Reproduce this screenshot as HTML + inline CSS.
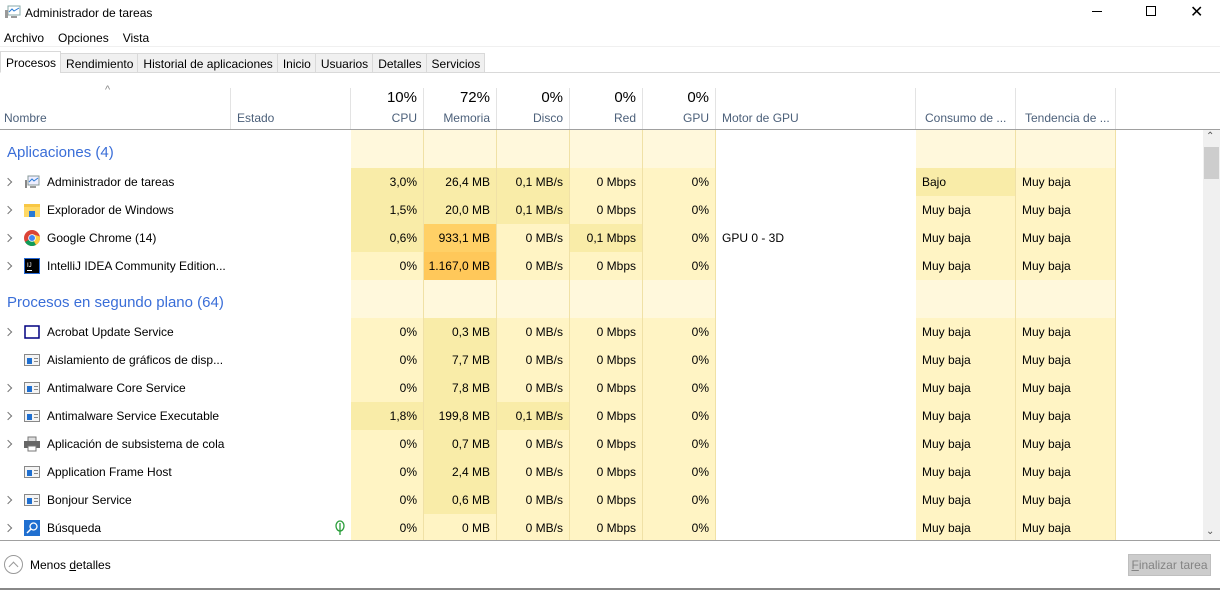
<!DOCTYPE html><html><head><meta charset="utf-8"><style>
*{margin:0;padding:0;box-sizing:border-box}
html,body{width:1220px;height:590px}
body{background:#fff;font-family:"Liberation Sans",sans-serif;font-size:12px;color:#000;position:relative;overflow:hidden}
.abs{position:absolute}
.menu span{margin-right:14px}
.tabs{position:absolute;top:52px;left:0;height:21px;display:flex}
.tab{border:1px solid #d9d9d9;background:#f0f0f0;padding:3px 4px 0 5px;height:20px;margin-left:-1px;margin-top:1px}
.tab.act{background:#fff;border-bottom-color:#fff;margin-top:-1px;height:22px;padding-top:4px}
.hdr{position:absolute;top:88px;height:42px;border-right:1px solid #e3e3e3;text-align:right;padding-right:6px;color:#4c607a}
.hdr .p{font-size:15px;color:#000;position:absolute;right:6px;top:1px}
.hdr .l{position:absolute;right:6px;top:23px}
.row{position:absolute;left:0;width:1203px;height:28px}
.c{position:absolute;top:0;height:100%;line-height:28px;text-align:right;padding-right:6px;border-right:1px solid #f0e1a6;background:#fff4c4}
.d{background:#f9eca8}
.o{background:#ffd066}
.o2{background:#ffc85a}
.g .c{background:#fff8dc}
.nm{position:absolute;left:47px;line-height:28px}
.ar{position:absolute;left:5px;top:11px;width:6px;height:6px;border-right:1.3px solid #777;border-top:1.3px solid #777;transform:rotate(45deg)}
.ic{position:absolute;left:24px;top:6px;width:16px;height:16px}
.gt{position:absolute;left:7px;top:3px;font-size:15px;color:#3a6ed8;line-height:40px}
.txt{position:absolute;line-height:28px;padding-left:6px}
</style></head><body>
<svg class="abs" style="left:5px;top:5px" width="16" height="14"><rect x="3" y="1" width="12" height="9" fill="#fff" stroke="#8aa" /><polyline points="4,7 7,4 9,6 14,3" fill="none" stroke="#2a7bd6"/><rect x="0" y="5" width="3" height="8" fill="#999"/><rect x="6" y="11" width="6" height="2" fill="#999"/></svg>
<div class="abs" style="left:25px;top:6px">Administrador de tareas</div>
<div class="abs" style="left:1092px;top:11px;width:10px;height:1px;background:#000"></div>
<div class="abs" style="left:1146px;top:6px;width:10px;height:10px;border:1px solid #000"></div>
<div class="abs" style="left:1190px;top:2px;font-size:16px">✕</div>
<div class="abs menu" style="left:4px;top:31px"><span>Archivo</span><span>Opciones</span><span>Vista</span></div>
<div class="abs" style="left:0;top:46px;width:1220px;height:1px;background:#f0f0f0"></div>
<div class="abs" style="left:0;top:72px;width:1220px;height:1px;background:#d9d9d9"></div>
<div class="tabs"><div class="tab act" style="margin-left:0">Procesos</div><div class="tab">Rendimiento</div><div class="tab">Historial de aplicaciones</div><div class="tab">Inicio</div><div class="tab">Usuarios</div><div class="tab">Detalles</div><div class="tab">Servicios</div></div>
<div class="abs" style="left:105px;top:84px;color:#888;font-size:11px">^</div>
<div class="hdr" style="left:0;width:231px"><span class="l" style="left:4px;right:auto">Nombre</span></div>
<div class="hdr" style="left:231px;width:120px"><span class="l" style="left:6px;right:auto">Estado</span></div>
<div class="hdr" style="left:351px;width:73px"><span class="p">10%</span><span class="l">CPU</span></div>
<div class="hdr" style="left:424px;width:73px"><span class="p">72%</span><span class="l">Memoria</span></div>
<div class="hdr" style="left:497px;width:73px"><span class="p">0%</span><span class="l">Disco</span></div>
<div class="hdr" style="left:570px;width:73px"><span class="p">0%</span><span class="l">Red</span></div>
<div class="hdr" style="left:643px;width:73px"><span class="p">0%</span><span class="l">GPU</span></div>
<div class="hdr" style="left:716px;width:200px"><span class="l" style="left:6px;right:auto">Motor de GPU</span></div>
<div class="hdr" style="left:916px;width:100px"><span class="l" style="left:9px;right:auto">Consumo de ...</span></div>
<div class="hdr" style="left:1016px;width:100px"><span class="l" style="left:9px;right:auto">Tendencia de ...</span></div>
<div class="abs" style="left:0;top:129px;width:1220px;height:1px;background:#a0a0a0"></div>

<div id="rows">
<div class="row g" style="top:130px;height:38px"><div class="gt">Aplicaciones (4)</div><div class="c" style="left:351px;width:73px"></div><div class="c" style="left:424px;width:73px"></div><div class="c" style="left:497px;width:73px"></div><div class="c" style="left:570px;width:73px"></div><div class="c" style="left:643px;width:73px"></div><div class="c" style="left:916px;width:100px"></div><div class="c" style="left:1016px;width:100px"></div></div>

<div class="row" style="top:168px"><div class="ar"></div><svg class="ic"><rect x="4" y="2" width="11" height="9" fill="#eef" stroke="#899"/><polyline points="5,8 8,5 10,7 14,4" fill="none" stroke="#2a7bd6"/><rect x="1" y="6" width="2" height="8" fill="#888"/><rect x="6" y="12" width="6" height="2" fill="#999"/></svg><div class="nm">Administrador de tareas</div><div class="c d" style="left:351px;width:73px">3,0%</div><div class="c d" style="left:424px;width:73px">26,4 MB</div><div class="c d" style="left:497px;width:73px">0,1 MB/s</div><div class="c" style="left:570px;width:73px">0 Mbps</div><div class="c" style="left:643px;width:73px">0%</div><div class="c d" style="left:916px;width:100px;text-align:left;padding-left:6px">Bajo</div><div class="c" style="left:1016px;width:100px;text-align:left;padding-left:6px">Muy baja</div></div>

<div class="row" style="top:196px"><div class="ar"></div><svg class="ic"><rect x="0" y="2" width="16" height="13" fill="#f8c745"/><rect x="0" y="5" width="16" height="10" fill="#ffd966"/><rect x="5" y="9" width="6" height="6" fill="#2a7bd6"/></svg><div class="nm">Explorador de Windows</div><div class="c d" style="left:351px;width:73px">1,5%</div><div class="c d" style="left:424px;width:73px">20,0 MB</div><div class="c d" style="left:497px;width:73px">0,1 MB/s</div><div class="c" style="left:570px;width:73px">0 Mbps</div><div class="c" style="left:643px;width:73px">0%</div><div class="c" style="left:916px;width:100px;text-align:left;padding-left:6px">Muy baja</div><div class="c" style="left:1016px;width:100px;text-align:left;padding-left:6px">Muy baja</div></div>

<div class="row" style="top:224px"><div class="ar"></div><svg class="ic"><circle cx="8" cy="8" r="8" fill="#db4437"/><path d="M8 8 L1.1 12 A8 8 0 0 0 12 14.9Z" fill="#0f9d58"/><path d="M8 8 L12 14.9 A8 8 0 0 0 15.9 6.5 L8 4Z" fill="#ffcd40"/><circle cx="8" cy="8" r="3.8" fill="#fff"/><circle cx="8" cy="8" r="3" fill="#4285f4"/></svg><div class="nm">Google Chrome (14)</div><div class="c d" style="left:351px;width:73px">0,6%</div><div class="c o" style="left:424px;width:73px">933,1 MB</div><div class="c" style="left:497px;width:73px">0 MB/s</div><div class="c d" style="left:570px;width:73px">0,1 Mbps</div><div class="c" style="left:643px;width:73px">0%</div><div class="txt" style="left:716px">GPU 0 - 3D</div><div class="c" style="left:916px;width:100px;text-align:left;padding-left:6px">Muy baja</div><div class="c" style="left:1016px;width:100px;text-align:left;padding-left:6px">Muy baja</div></div>

<div class="row" style="top:252px"><div class="ar"></div><svg class="ic"><rect x="0" y="0" width="16" height="16" fill="#2a6bd6"/><rect x="1" y="1" width="14" height="14" fill="#000"/><text x="3" y="9" font-size="6" fill="#fff" font-family="Liberation Sans">IJ</text><rect x="3" y="12" width="5" height="1" fill="#fff"/></svg><div class="nm">IntelliJ IDEA Community Edition...</div><div class="c" style="left:351px;width:73px">0%</div><div class="c o2" style="left:424px;width:73px">1.167,0 MB</div><div class="c" style="left:497px;width:73px">0 MB/s</div><div class="c" style="left:570px;width:73px">0 Mbps</div><div class="c" style="left:643px;width:73px">0%</div><div class="c" style="left:916px;width:100px;text-align:left;padding-left:6px">Muy baja</div><div class="c" style="left:1016px;width:100px;text-align:left;padding-left:6px">Muy baja</div></div>

<div class="row g" style="top:280px;height:38px"><div class="gt">Procesos en segundo plano (64)</div><div class="c" style="left:351px;width:73px"></div><div class="c" style="left:424px;width:73px"></div><div class="c" style="left:497px;width:73px"></div><div class="c" style="left:570px;width:73px"></div><div class="c" style="left:643px;width:73px"></div><div class="c" style="left:916px;width:100px"></div><div class="c" style="left:1016px;width:100px"></div></div>

<div class="row" style="top:318px"><div class="ar"></div><svg class="ic"><rect x="1" y="2" width="14" height="12" fill="#fff" stroke="#000080" stroke-width="1.5"/></svg><div class="nm">Acrobat Update Service</div><div class="c" style="left:351px;width:73px">0%</div><div class="c d" style="left:424px;width:73px">0,3 MB</div><div class="c" style="left:497px;width:73px">0 MB/s</div><div class="c" style="left:570px;width:73px">0 Mbps</div><div class="c" style="left:643px;width:73px">0%</div><div class="c" style="left:916px;width:100px;text-align:left;padding-left:6px">Muy baja</div><div class="c" style="left:1016px;width:100px;text-align:left;padding-left:6px">Muy baja</div></div>

<div class="row" style="top:346px"><svg class="ic"><rect x="0.5" y="2.5" width="15" height="11" fill="#f4f4f4" stroke="#888"/><rect x="3" y="6" width="5" height="6" fill="#1f6fd0"/><rect x="10" y="6" width="4" height="1" fill="#888"/><rect x="10" y="9" width="4" height="1" fill="#888"/></svg><div class="nm">Aislamiento de gráficos de disp...</div><div class="c" style="left:351px;width:73px">0%</div><div class="c d" style="left:424px;width:73px">7,7 MB</div><div class="c" style="left:497px;width:73px">0 MB/s</div><div class="c" style="left:570px;width:73px">0 Mbps</div><div class="c" style="left:643px;width:73px">0%</div><div class="c" style="left:916px;width:100px;text-align:left;padding-left:6px">Muy baja</div><div class="c" style="left:1016px;width:100px;text-align:left;padding-left:6px">Muy baja</div></div>

<div class="row" style="top:374px"><div class="ar"></div><svg class="ic"><rect x="0.5" y="2.5" width="15" height="11" fill="#f4f4f4" stroke="#888"/><rect x="3" y="6" width="5" height="6" fill="#1f6fd0"/><rect x="10" y="6" width="4" height="1" fill="#888"/><rect x="10" y="9" width="4" height="1" fill="#888"/></svg><div class="nm">Antimalware Core Service</div><div class="c" style="left:351px;width:73px">0%</div><div class="c d" style="left:424px;width:73px">7,8 MB</div><div class="c" style="left:497px;width:73px">0 MB/s</div><div class="c" style="left:570px;width:73px">0 Mbps</div><div class="c" style="left:643px;width:73px">0%</div><div class="c" style="left:916px;width:100px;text-align:left;padding-left:6px">Muy baja</div><div class="c" style="left:1016px;width:100px;text-align:left;padding-left:6px">Muy baja</div></div>

<div class="row" style="top:402px"><div class="ar"></div><svg class="ic"><rect x="0.5" y="2.5" width="15" height="11" fill="#f4f4f4" stroke="#888"/><rect x="3" y="6" width="5" height="6" fill="#1f6fd0"/><rect x="10" y="6" width="4" height="1" fill="#888"/><rect x="10" y="9" width="4" height="1" fill="#888"/></svg><div class="nm">Antimalware Service Executable</div><div class="c d" style="left:351px;width:73px">1,8%</div><div class="c d" style="left:424px;width:73px">199,8 MB</div><div class="c d" style="left:497px;width:73px">0,1 MB/s</div><div class="c" style="left:570px;width:73px">0 Mbps</div><div class="c" style="left:643px;width:73px">0%</div><div class="c" style="left:916px;width:100px;text-align:left;padding-left:6px">Muy baja</div><div class="c" style="left:1016px;width:100px;text-align:left;padding-left:6px">Muy baja</div></div>

<div class="row" style="top:430px"><div class="ar"></div><svg class="ic"><rect x="4" y="1" width="8" height="5" fill="#ddd" stroke="#777"/><rect x="0" y="5" width="16" height="7" fill="#666"/><rect x="4" y="10" width="8" height="5" fill="#fff" stroke="#777"/></svg><div class="nm">Aplicación de subsistema de cola</div><div class="c" style="left:351px;width:73px">0%</div><div class="c d" style="left:424px;width:73px">0,7 MB</div><div class="c" style="left:497px;width:73px">0 MB/s</div><div class="c" style="left:570px;width:73px">0 Mbps</div><div class="c" style="left:643px;width:73px">0%</div><div class="c" style="left:916px;width:100px;text-align:left;padding-left:6px">Muy baja</div><div class="c" style="left:1016px;width:100px;text-align:left;padding-left:6px">Muy baja</div></div>

<div class="row" style="top:458px"><svg class="ic"><rect x="0.5" y="2.5" width="15" height="11" fill="#f4f4f4" stroke="#888"/><rect x="3" y="6" width="5" height="6" fill="#1f6fd0"/><rect x="10" y="6" width="4" height="1" fill="#888"/><rect x="10" y="9" width="4" height="1" fill="#888"/></svg><div class="nm">Application Frame Host</div><div class="c" style="left:351px;width:73px">0%</div><div class="c d" style="left:424px;width:73px">2,4 MB</div><div class="c" style="left:497px;width:73px">0 MB/s</div><div class="c" style="left:570px;width:73px">0 Mbps</div><div class="c" style="left:643px;width:73px">0%</div><div class="c" style="left:916px;width:100px;text-align:left;padding-left:6px">Muy baja</div><div class="c" style="left:1016px;width:100px;text-align:left;padding-left:6px">Muy baja</div></div>

<div class="row" style="top:486px"><div class="ar"></div><svg class="ic"><rect x="0.5" y="2.5" width="15" height="11" fill="#f4f4f4" stroke="#888"/><rect x="3" y="6" width="5" height="6" fill="#1f6fd0"/><rect x="10" y="6" width="4" height="1" fill="#888"/><rect x="10" y="9" width="4" height="1" fill="#888"/></svg><div class="nm">Bonjour Service</div><div class="c" style="left:351px;width:73px">0%</div><div class="c d" style="left:424px;width:73px">0,6 MB</div><div class="c" style="left:497px;width:73px">0 MB/s</div><div class="c" style="left:570px;width:73px">0 Mbps</div><div class="c" style="left:643px;width:73px">0%</div><div class="c" style="left:916px;width:100px;text-align:left;padding-left:6px">Muy baja</div><div class="c" style="left:1016px;width:100px;text-align:left;padding-left:6px">Muy baja</div></div>

<div class="row" style="top:514px"><div class="ar"></div><svg class="ic"><rect x="0" y="0" width="16" height="16" fill="#1f6fd0"/><circle cx="9.5" cy="6.5" r="3.5" fill="none" stroke="#fff" stroke-width="1.3"/><line x1="7" y1="9" x2="3" y2="13" stroke="#fff" stroke-width="1.5"/></svg><div class="nm">Búsqueda</div><svg class="abs" style="left:334px;top:6px" width="12" height="16"><ellipse cx="6" cy="6" rx="4" ry="5" fill="none" stroke="#2a9d3a" stroke-width="1.3"/><line x1="6" y1="3" x2="6" y2="15" stroke="#2a9d3a" stroke-width="1.3"/></svg><div class="c" style="left:351px;width:73px">0%</div><div class="c" style="left:424px;width:73px">0 MB</div><div class="c" style="left:497px;width:73px">0 MB/s</div><div class="c" style="left:570px;width:73px">0 Mbps</div><div class="c" style="left:643px;width:73px">0%</div><div class="c" style="left:916px;width:100px;text-align:left;padding-left:6px">Muy baja</div><div class="c" style="left:1016px;width:100px;text-align:left;padding-left:6px">Muy baja</div></div>
</div>

<div class="abs" style="left:1203px;top:130px;width:17px;height:410px;background:#f0f0f0"></div>
<div class="abs" style="left:1206px;top:131px;font-size:10px;color:#555">&#8963;</div>
<div class="abs" style="left:1204px;top:147px;width:15px;height:32px;background:#cdcdcd"></div>
<div class="abs" style="left:1206px;top:526px;font-size:10px;color:#555">&#8964;</div>
<div class="abs" style="left:0;top:540px;width:1220px;height:50px;background:#fff;border-top:1px solid #a0a0a0"></div>
<div class="abs" style="left:4px;top:555px;width:19px;height:19px;border:1px solid #999;border-radius:50%"></div>
<div class="abs" style="left:10px;top:563px;width:7px;height:7px;border-left:1px solid #999;border-top:1px solid #999;transform:rotate(45deg)"></div>
<div class="abs" style="left:30px;top:558px">Menos <u>d</u>etalles</div>
<div class="abs" style="left:1128px;top:554px;width:83px;height:22px;background:#ccc;border:1px solid #bfbfbf;color:#838383;text-align:center;line-height:20px"><u>F</u>inalizar tarea</div>
<div class="abs" style="left:0;top:588px;width:1220px;height:2px;background:#888"></div>
</body></html>
